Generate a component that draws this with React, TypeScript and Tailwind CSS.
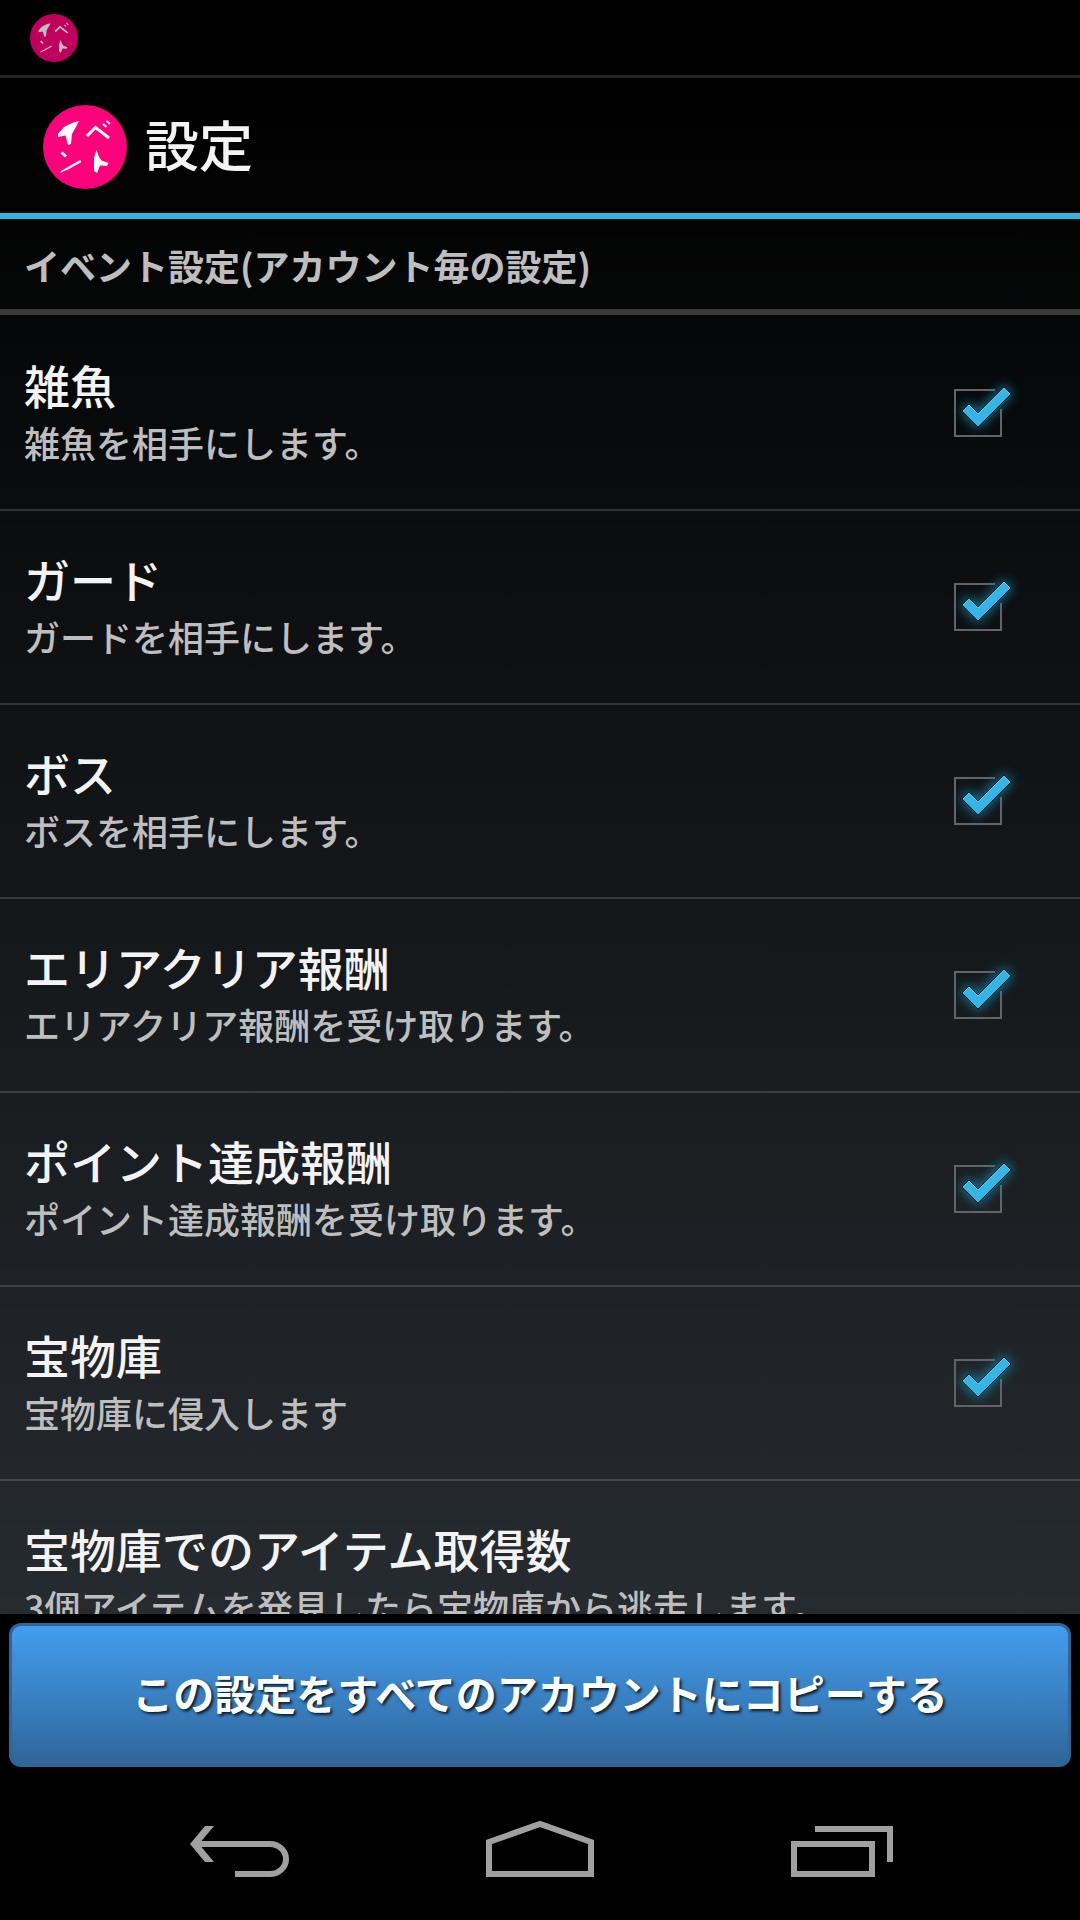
type Pref = { id: string; title: string; summary: string };

const preferences: Pref[] = [
  { id: "zako", title: "雑魚", summary: "雑魚を相手にします。" },
  { id: "guard", title: "ガード", summary: "ガードを相手にします。" },
  { id: "boss", title: "ボス", summary: "ボスを相手にします。" },
  { id: "area", title: "エリアクリア報酬", summary: "エリアクリア報酬を受け取ります。" },
  { id: "point", title: "ポイント達成報酬", summary: "ポイント達成報酬を受け取ります。" },
  { id: "treasure", title: "宝物庫", summary: "宝物庫に侵入します" },
];

function EventLogo({ className }: { className: string }) {
  return (
    <svg viewBox="0 0 84 84" className={className} aria-hidden="true">
      <circle cx="42" cy="42" r="42" fill="#ff007d" />
      <g fill="#fff">
        <path d="M36 16 L34 20 L29 29 L28 39 L25 40 L22.5 30.5 L15 32 L15 29 L21 22 L29 18 Z" />
        <path d="M17 68 L18 66 L37 55 L38.5 57 L26 64 Z" />
        <path d="M53.5 45 L56 52 L58.5 55.5 L65.5 58 L64 61 L57 60.5 L54 68 L51 66 L51 53 Z" />
      </g>
      <g fill="none" stroke="#fff">
        <path d="M44 31 L52.5 22.5 L66 33" strokeWidth="3" />
        <path d="M60 19 L63.5 22 M63.5 16 L67 19" strokeWidth="2" />
        <path d="M18.5 47.5 L23 51.5" strokeWidth="3" />
      </g>
    </svg>
  );
}

function HoloCheckbox({ id, label }: { id: string; label: string }) {
  return (
    <span className="relative block size-24 shrink-0">
      <input
        id={id}
        type="checkbox"
        defaultChecked
        aria-label={label}
        className="peer absolute inset-0 size-full cursor-pointer appearance-none"
      />
      <svg
        viewBox="0 0 96 96"
        className="pointer-events-none absolute inset-0 size-full"
        aria-hidden="true"
      >
        <path d="M65 25 H25 V71 H71 V44" fill="none" stroke="#626466" strokeWidth="2" />
      </svg>
      <svg
        viewBox="0 0 96 96"
        className="pointer-events-none invisible absolute inset-0 size-full overflow-visible peer-checked:visible"
        aria-hidden="true"
      >
        <defs>
          <filter id={id + "-glow"} x="-50%" y="-50%" width="200%" height="200%">
            <feGaussianBlur stdDeviation="6" />
          </filter>
        </defs>
        <path
          d="M32 46 L39 39 L48 48 L74 22 L81 29 L48 62 Z"
          fill="#1c8bb0"
          stroke="#1c8bb0"
          strokeWidth="3"
          opacity="0.8"
          filter={"url(#" + id + "-glow)"}
        />
        <path
          d="M32 46 L39 39 L48 48 L74 22 L81 29 L48 62 Z"
          fill="#33b5e5"
          stroke="#06222d"
          strokeWidth="1"
        />
        <path d="M33 46 L39 40 L48 49 L74 23 L80 29" fill="none" stroke="#62c8ee" strokeWidth="1" />
      </svg>
    </span>
  );
}

function PrefText({ title, summary }: { title: string; summary: string }) {
  return (
    <span className="block min-w-0 flex-1 pb-0.5 font-medium whitespace-nowrap">
      <span className="block text-[46px] leading-[60px] text-[#f3f3f3]">{title}</span>
      <span className="block text-[36px] leading-[56px] text-[#bebebe]">{summary}</span>
    </span>
  );
}

export default function App() {
  return (
    <div
      lang="ja"
      className="flex h-screen flex-col overflow-hidden bg-black font-['Noto_Sans_CJK_JP',sans-serif]"
    >
      <div className="flex h-[75px] shrink-0 items-center bg-black pl-[30px]">
        <EventLogo className="size-12 opacity-75" />
      </div>
      <div className="flex min-h-0 flex-1 flex-col bg-linear-to-b/srgb from-black to-[#262b30]">
        <header className="flex h-36 shrink-0 items-center gap-[18px] border-t-[3px] border-b-[6px] border-t-[#222] border-b-[#33b5e5] pt-0.5 pl-[43px]">
          <EventLogo className="size-[84px]" />
          <h1 className="pb-1.5 text-[54px] leading-[80px] font-medium text-[#f3f3f3]">設定</h1>
        </header>
        <main className="min-h-0 flex-1 overflow-hidden">
          <h2 className="flex h-24 items-center border-b-[6px] border-[#3a3a3a] px-6 pt-0.5 text-[36px] leading-[54px] font-bold whitespace-nowrap text-[#bebebe]">
            イベント設定(アカウント毎の設定)
          </h2>
          <ul className="pt-0.5">
            {preferences.map((p) => (
              <li key={p.id} className="border-b-2 border-white/15">
                <label htmlFor={p.id} className="flex h-48 items-center pr-[54px] pl-6">
                  <PrefText title={p.title} summary={p.summary} />
                  <HoloCheckbox id={p.id} label={p.title} />
                </label>
              </li>
            ))}
            <li>
              <button type="button" className="flex h-48 w-full items-center px-6 text-left">
                <PrefText
                  title="宝物庫でのアイテム取得数"
                  summary="3個アイテムを発見したら宝物庫から逃走します。"
                />
              </button>
            </li>
          </ul>
        </main>
      </div>
      <div className="shrink-0 bg-black px-[9px] pt-[9px]">
        <button
          type="button"
          className="h-36 w-full rounded-xl border-[3px] border-[#2f6699] bg-linear-to-b/srgb from-[#449def] to-[#2f6699] pb-1.5 text-[41px] leading-[60px] font-bold whitespace-nowrap text-white [text-shadow:2px_2px_3px_rgba(0,0,0,0.8)]"
        >
          この設定をすべてのアカウントにコピーする
        </button>
      </div>
      <nav className="mt-[9px] flex h-36 shrink-0 items-center justify-center bg-black pt-1">
        <button type="button" aria-label="戻る" className="flex h-full w-[302px] items-center justify-center">
          <svg viewBox="0 0 104 60" className="h-[60px] w-[104px]">
            <path d="M10 24 H84 A16 15 0 0 1 84 54 H49" fill="none" stroke="#a0a0a0" strokeWidth="6" />
            <path d="M4 24 L19 6 H28 L13 24 L28 42 H19 Z" fill="#a0a0a0" />
          </svg>
        </button>
        <button type="button" aria-label="ホーム" className="flex h-full w-[302px] items-center justify-center">
          <svg viewBox="0 0 108 60" className="h-[60px] w-[108px]" fill="none" stroke="#a0a0a0" strokeWidth="6">
            <path d="M3 22 L54 4 L105 22 V54 H3 Z" />
          </svg>
        </button>
        <button type="button" aria-label="最近使ったアプリ" className="flex h-full w-[302px] items-center justify-center">
          <svg viewBox="0 0 102 60" className="h-[60px] w-[102px]" fill="none" stroke="#a0a0a0" strokeWidth="6">
            <path d="M24 9 H99 V42" />
            <path d="M3 24 H81 V54 H3 Z" />
          </svg>
        </button>
      </nav>
    </div>
  );
}
